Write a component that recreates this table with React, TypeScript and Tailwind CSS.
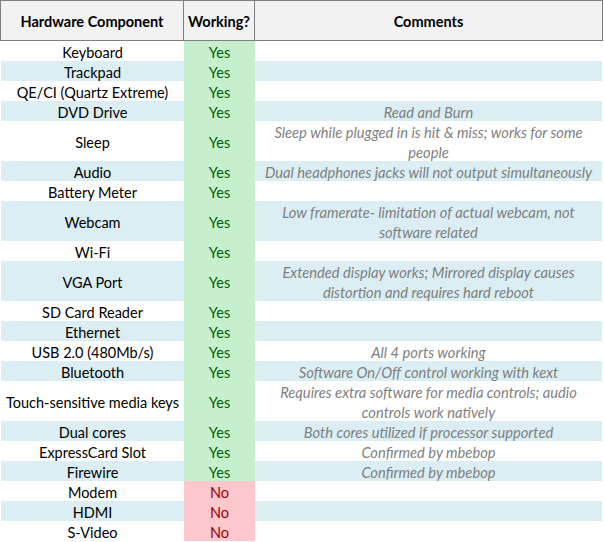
import React from 'react';

type Row = {
  name: string;
  ok: boolean;
  comment?: string[];
};

const rows: Row[] = [
  { name: 'Keyboard', ok: true },
  { name: 'Trackpad', ok: true },
  { name: 'QE/CI (Quartz Extreme)', ok: true },
  { name: 'DVD Drive', ok: true, comment: ['Read and Burn'] },
  { name: 'Sleep', ok: true, comment: ['Sleep while plugged in is hit & miss; works for some', 'people'] },
  { name: 'Audio', ok: true, comment: ['Dual headphones jacks will not output simultaneously'] },
  { name: 'Battery Meter', ok: true },
  { name: 'Webcam', ok: true, comment: ['Low framerate- limitation of actual webcam, not', 'software related'] },
  { name: 'Wi-Fi', ok: true },
  { name: 'VGA Port', ok: true, comment: ['Extended display works; Mirrored display causes', 'distortion and requires hard reboot'] },
  { name: 'SD Card Reader', ok: true },
  { name: 'Ethernet', ok: true },
  { name: 'USB 2.0 (480Mb/s)', ok: true, comment: ['All 4 ports working'] },
  { name: 'Bluetooth', ok: true, comment: ['Software On/Off control working with kext'] },
  { name: 'Touch-sensitive media keys', ok: true, comment: ['Requires extra software for media controls; audio', 'controls work natively'] },
  { name: 'Dual cores', ok: true, comment: ['Both cores utilized if processor supported'] },
  { name: 'ExpressCard Slot', ok: true, comment: ['Confirmed by mbebop'] },
  { name: 'Firewire', ok: true, comment: ['Confirmed by mbebop'] },
  { name: 'Modem', ok: false },
  { name: 'HDMI', ok: false },
  { name: 'S-Video', ok: false },
];

const App = () => {
  return (
    <div className="w-[603px] bg-white text-[14.5px] leading-[20px] text-black font-['Lato','Liberation_Sans',sans-serif]">
      {/* header */}
      <div className="flex h-[41px] border border-[#7f7f7f] bg-[#f2f2f2] pt-[3px] font-bold">
        <div className="flex w-[183px] items-center justify-center border-r border-[#7f7f7f] -mt-[3px] pt-[3px]">Hardware Component</div>
        <div className="flex w-[71px] items-center justify-center border-r border-[#7f7f7f] -mt-[3px] pt-[3px]">Working?</div>
        <div className="flex flex-1 items-center justify-center">Comments</div>
      </div>

      {/* body */}
      <div className="px-px">
        {rows.map((row, i) => {
          const tall = row.comment && row.comment.length > 1;
          return (
            <div
              key={row.name}
              className={`flex ${tall ? 'h-[40px]' : 'h-[20px]'} ${i % 2 === 1 ? 'bg-[#daeef3]' : 'bg-white'}`}
            >
              <div className="flex w-[183px] items-center justify-center whitespace-nowrap pt-[3px]">{row.name}</div>
              <div
                className={`flex w-[71px] items-center justify-center pt-[3px] ${
                  row.ok ? 'bg-[#c6efce] text-[#006100]' : 'bg-[#ffc7ce] text-[#9c0006]'
                }`}
              >
                {row.ok ? 'Yes' : 'No'}
              </div>
              <div className="flex flex-1 flex-col items-center justify-center whitespace-nowrap pt-[2px] text-[14.7px] italic text-[#7f7f7f]">
                {row.comment?.map((line) => (
                  <span key={line}>{line}</span>
                ))}
              </div>
            </div>
          );
        })}
      </div>
    </div>
  );
};

export default App;
